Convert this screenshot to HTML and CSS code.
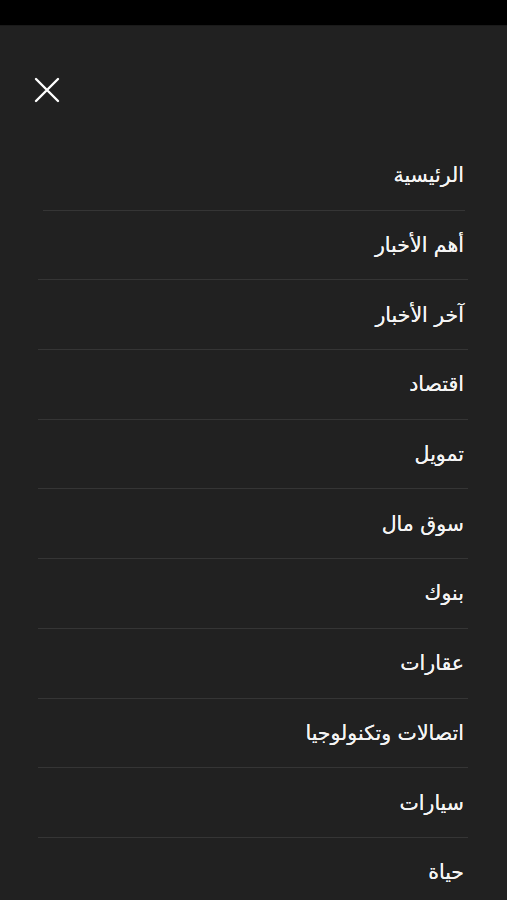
FILE: index.html
```html
<!DOCTYPE html>
<html lang="ar">
<head>
<meta charset="utf-8">
<link rel="stylesheet" href="styles.css">
</head>
<body>
<div class="status"></div>
<div class="panel">
  <div class="close">
    <svg width="26" height="26" viewBox="0 0 26 26"><path d="M2 2 L24 24 M24 2 L2 24" stroke="#fff" stroke-width="2.4" stroke-linecap="round" fill="none"/></svg>
  </div>
  <nav class="menu" dir="rtl">
    <div class="item first">الرئيسية</div>
    <div class="item">أهم الأخبار</div>
    <div class="item">آخر الأخبار</div>
    <div class="item">اقتصاد</div>
    <div class="item">تمويل</div>
    <div class="item">سوق مال</div>
    <div class="item">بنوك</div>
    <div class="item">عقارات</div>
    <div class="item">اتصالات وتكنولوجيا</div>
    <div class="item">سيارات</div>
    <div class="item last">حياة</div>
  </nav>
</div>
</body>
</html>
```
FILE: styles.css
```css
html, body {
  margin: 0;
  padding: 0;
  background: #212121;
  height: 100%;
  overflow: hidden;
}
.status {
  height: 25px;
  background: #000;
  border-bottom: 1px solid #1a1a1a;
}
.panel {
  display: flex;
  flex-direction: column;
}
.close {
  padding: 51px 0 0 34px;
  height: 26px;
  line-height: 0;
}
.menu {
  display: flex;
  flex-direction: column;
  margin-top: 38px;
  padding: 0 39px 0 38px;
}
.item {
  height: 68.7px;
  display: flex;
  align-items: center;
  border-bottom: 1px solid #353535;
  color: #f4f4f4;
  font-family: "DejaVu Sans", sans-serif;
  font-size: 20.5px;
  text-shadow: 0 0 0.4px #f4f4f4;
  padding-right: 4px;
}
.item.first {
  margin-left: 5px;
  margin-right: 3px;
  padding-right: 1px;
}
.item.last {
  border-bottom: none;
}
```
